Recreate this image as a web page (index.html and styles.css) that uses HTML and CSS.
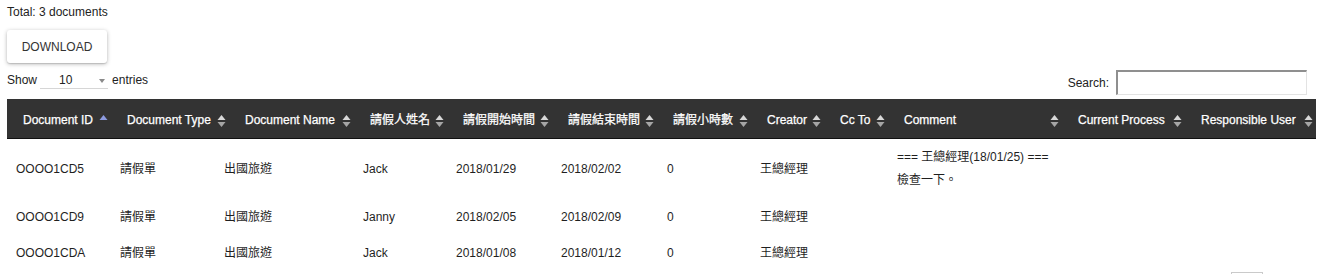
FILE: index.html
```html
<!DOCTYPE html>
<html lang="zh-Hant">
<head>
<meta charset="utf-8">
<title>Documents</title>
<link rel="stylesheet" href="styles.css">
</head>
<body>
<div class="page">
  <div class="total">Total: 3 documents</div>
  <button class="btn" type="button">DOWNLOAD</button>
  <div class="controls">
    <div class="length">
      <span>Show</span>
      <div class="select"><span class="select-val">10</span><span class="caret"></span></div>
      <span>entries</span>
    </div>
    <label class="search">
      <span>Search:</span>
      <input type="text" class="search-input">
    </label>
  </div>

  <table class="thead-table">
    <colgroup>
      <col style="width:104px"><col style="width:118px"><col style="width:125px"><col style="width:93px">
      <col style="width:105px"><col style="width:105px"><col style="width:94px"><col style="width:73px">
      <col style="width:64px"><col style="width:174px"><col style="width:123px"><col style="width:131px">
    </colgroup>
    <thead>
      <tr>
        <th><div class="th-in"><span>Document ID</span><svg class="sort asc" viewBox="0 0 9 14" width="9" height="14"><polygon points="0.5,6 4.5,1 8.5,6" fill="#8d9be0"/></svg></div></th>
        <th><div class="th-in"><span>Document Type</span><svg class="sort" viewBox="0 0 9 14" width="9" height="14"><polygon points="0.5,6 4.5,1 8.5,6" fill="#d9d9d9"/><polygon points="0.5,8 8.5,8 4.5,13" fill="#a6a6a6"/></svg></div></th>
        <th><div class="th-in"><span>Document Name</span><svg class="sort" viewBox="0 0 9 14" width="9" height="14"><polygon points="0.5,6 4.5,1 8.5,6" fill="#d9d9d9"/><polygon points="0.5,8 8.5,8 4.5,13" fill="#a6a6a6"/></svg></div></th>
        <th><div class="th-in"><span>請假人姓名</span><svg class="sort" viewBox="0 0 9 14" width="9" height="14"><polygon points="0.5,6 4.5,1 8.5,6" fill="#d9d9d9"/><polygon points="0.5,8 8.5,8 4.5,13" fill="#a6a6a6"/></svg></div></th>
        <th><div class="th-in"><span>請假開始時間</span><svg class="sort" viewBox="0 0 9 14" width="9" height="14"><polygon points="0.5,6 4.5,1 8.5,6" fill="#d9d9d9"/><polygon points="0.5,8 8.5,8 4.5,13" fill="#a6a6a6"/></svg></div></th>
        <th><div class="th-in"><span>請假結束時間</span><svg class="sort" viewBox="0 0 9 14" width="9" height="14"><polygon points="0.5,6 4.5,1 8.5,6" fill="#d9d9d9"/><polygon points="0.5,8 8.5,8 4.5,13" fill="#a6a6a6"/></svg></div></th>
        <th><div class="th-in"><span>請假小時數</span><svg class="sort" viewBox="0 0 9 14" width="9" height="14"><polygon points="0.5,6 4.5,1 8.5,6" fill="#d9d9d9"/><polygon points="0.5,8 8.5,8 4.5,13" fill="#a6a6a6"/></svg></div></th>
        <th><div class="th-in"><span>Creator</span><svg class="sort" viewBox="0 0 9 14" width="9" height="14"><polygon points="0.5,6 4.5,1 8.5,6" fill="#d9d9d9"/><polygon points="0.5,8 8.5,8 4.5,13" fill="#a6a6a6"/></svg></div></th>
        <th><div class="th-in"><span>Cc To</span><svg class="sort" viewBox="0 0 9 14" width="9" height="14"><polygon points="0.5,6 4.5,1 8.5,6" fill="#d9d9d9"/><polygon points="0.5,8 8.5,8 4.5,13" fill="#a6a6a6"/></svg></div></th>
        <th><div class="th-in"><span>Comment</span><svg class="sort" viewBox="0 0 9 14" width="9" height="14"><polygon points="0.5,6 4.5,1 8.5,6" fill="#d9d9d9"/><polygon points="0.5,8 8.5,8 4.5,13" fill="#a6a6a6"/></svg></div></th>
        <th><div class="th-in"><span>Current Process</span><svg class="sort" viewBox="0 0 9 14" width="9" height="14"><polygon points="0.5,6 4.5,1 8.5,6" fill="#d9d9d9"/><polygon points="0.5,8 8.5,8 4.5,13" fill="#a6a6a6"/></svg></div></th>
        <th><div class="th-in"><span>Responsible User</span><svg class="sort" viewBox="0 0 9 14" width="9" height="14"><polygon points="0.5,6 4.5,1 8.5,6" fill="#d9d9d9"/><polygon points="0.5,8 8.5,8 4.5,13" fill="#a6a6a6"/></svg></div></th>
      </tr>
    </thead>
  </table>

  <table class="tbody-table">
    <colgroup>
      <col style="width:104px"><col style="width:104px"><col style="width:139px"><col style="width:93px">
      <col style="width:105px"><col style="width:106px"><col style="width:93px"><col style="width:73px">
      <col style="width:64px"><col style="width:174px"><col style="width:123px"><col style="width:131px">
    </colgroup>
    <tbody>
      <tr>
        <td>OOOO1CD5</td><td>請假單</td><td>出國旅遊</td><td>Jack</td>
        <td>2018/01/29</td><td>2018/02/02</td><td>0</td><td>王總經理</td><td></td>
        <td class="comment">=== 王總經理(18/01/25) ===<br>檢查一下。</td><td></td><td></td>
      </tr>
      <tr>
        <td>OOOO1CD9</td><td>請假單</td><td>出國旅遊</td><td>Janny</td>
        <td>2018/02/05</td><td>2018/02/09</td><td>0</td><td>王總經理</td><td></td>
        <td class="comment"></td><td></td><td></td>
      </tr>
      <tr>
        <td>OOOO1CDA</td><td>請假單</td><td>出國旅遊</td><td>Jack</td>
        <td>2018/01/08</td><td>2018/01/12</td><td>0</td><td>王總經理</td><td></td>
        <td class="comment"></td><td></td><td></td>
      </tr>
    </tbody>
  </table>

  <nav class="pagination" aria-label="Pagination">
    <span class="page-btn current" aria-label="Page 1"></span>
  </nav>
</div>
</body>
</html>
```

FILE: styles.css
```css
* { box-sizing: border-box; }

html, body {
  margin: 0;
  padding: 0;
  background: #fff;
}

body {
  font-family: "Liberation Sans", Arial, "Noto Sans CJK TC", sans-serif;
  font-size: 12px;
  color: #222;
}

.page {
  padding: 0 7px;
}

.total {
  padding-top: 5px;
  line-height: 14px;
  color: #222;
}

.btn {
  display: block;
  margin-top: 11px;
  width: 100px;
  height: 33px;
  padding: 0;
  border: none;
  border-radius: 3px;
  background: #fff;
  color: #333;
  font-family: inherit;
  font-size: 12px;
  letter-spacing: 0;
  box-shadow: 0 1px 4px rgba(0, 0, 0, 0.28), 0 1px 1px rgba(0, 0, 0, 0.12);
}

.controls {
  display: flex;
  justify-content: space-between;
  align-items: center;
  height: 36px;
  padding-right: 9px;
}

.length {
  display: flex;
  align-items: center;
  padding-bottom: 3px;
  line-height: 14px;
}

.select {
  position: relative;
  width: 68px;
  height: 19px;
  margin: 0 4px 0 3px;
  border-bottom: 1px solid #d6d6d6;
  padding: 3px 0 0 19px;
  line-height: 14px;
  color: #222;
}

.caret {
  position: absolute;
  right: 3px;
  top: 9px;
  width: 0;
  height: 0;
  border-left: 3.5px solid transparent;
  border-right: 3.5px solid transparent;
  border-top: 4px solid #8a8a8a;
}

.search {
  display: flex;
  align-items: center;
  margin-top: 3px;
}

.search-input {
  margin-left: 7px;
  width: 191px;
  height: 25px;
  border-style: solid;
  border-width: 2px 1px 1px 2px;
  border-color: #8f8f8f #e3e3e3 #e3e3e3 #8f8f8f;
  background: #fff;
  padding: 0 4px;
  font-family: inherit;
  font-size: 12px;
}

table {
  border-collapse: collapse;
  border-spacing: 0;
  table-layout: fixed;
  width: 1309px;
}

.thead-table th {
  background: #333;
  color: #fff;
  font-weight: normal;
  text-align: left;
  padding: 14px 3px 10px 16px;
  line-height: 15px;
  border-bottom: 1px solid #111;
  white-space: nowrap;
  -webkit-text-stroke: 0.25px #fff;
}

.th-in {
  display: flex;
  justify-content: space-between;
  align-items: center;
}

.sort {
  display: block;
  flex: none;
}

.tbody-table td {
  padding: 7px 9px 6.5px 9px;
  line-height: 23px;
  vertical-align: middle;
  white-space: nowrap;
  color: #1f1f1f;
}

.tbody-table td.comment {
  vertical-align: top;
  white-space: normal;
}

.pagination {
  display: flex;
  justify-content: flex-end;
  padding-right: 53px;
}

.page-btn {
  display: block;
  width: 32px;
  height: 28px;
  border: 1px solid #cacaca;
  background: #fff;
}
```
